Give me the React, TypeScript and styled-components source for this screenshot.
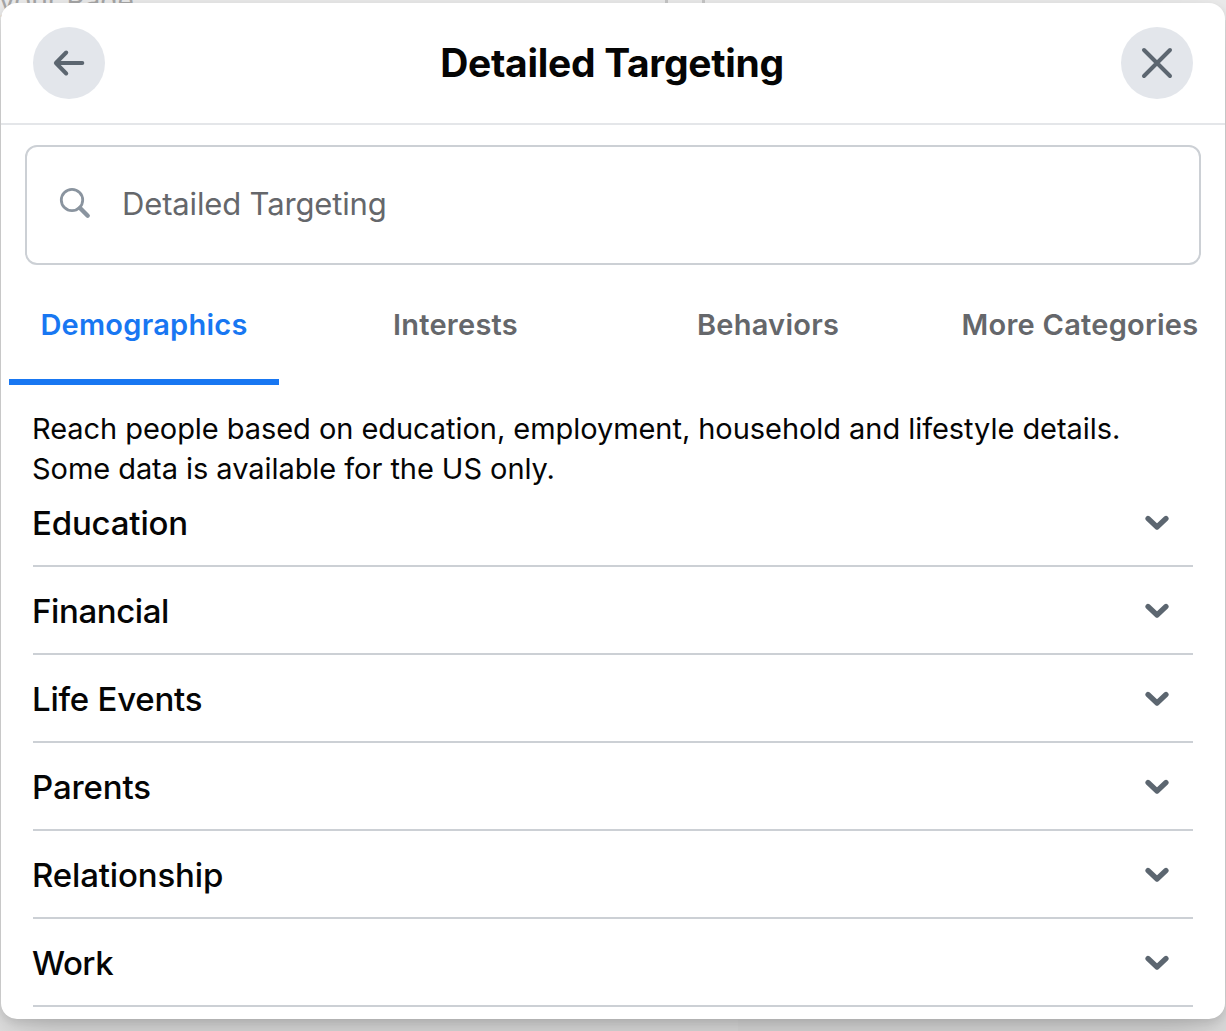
import React, { useState } from "react";
import styled, { createGlobalStyle } from "styled-components";

const GlobalStyle = createGlobalStyle`
  *, *::before, *::after { box-sizing: border-box; }
  html, body { margin: 0; height: 100%; overflow: hidden; }
  body { background: #ebebeb; font-family: Inter, "Liberation Sans", sans-serif; color: #050505; }
  #root { height: 100%; }
  button { font: inherit; border: 0; background: none; padding: 0; color: inherit; text-align: left; }
`;

const Page = styled.div`
  position: relative;
  height: 1031px;
  overflow: hidden;
  padding: 3px 1px 12px;
  background: linear-gradient(to right, #e8e8e8 0 738px, #e5e5e5 738px);
  isolation: isolate;
`;

const Backdrop = styled.div`
  position: absolute;
  inset: 0 0 auto 0;
  height: 20px;
  z-index: -1;
  background: #ededed;
  color: #a8a8a8;
  font-size: 28.2px;
  line-height: 30px;
  white-space: nowrap;
`;

const BackdropText = styled.span`
  position: absolute;
  left: -1px;
  top: -14px;
`;

const BackdropPill = styled.span`
  position: absolute;
  left: 665px;
  top: -26px;
  width: 40px;
  height: 40px;
  border: 3px solid #c8c8c8;
  border-radius: 9px;
`;

const Dialog = styled.section`
  display: flex;
  flex-direction: column;
  height: 1016px;
  background: #fff;
  border-radius: 16px;
  box-shadow: 0 24px 56px rgba(0, 0, 0, 0.2), 0 4px 8px rgba(0, 0, 0, 0.1);
`;

const Header = styled.header`
  display: flex;
  align-items: center;
  justify-content: space-between;
  height: 122px;
  padding: 0 32px;
  border-bottom: 2px solid #e4e6e9;
`;

const Title = styled.h1`
  margin: 0 2px 0 0;
  font-size: 39px;
  font-weight: 700;
  line-height: 48px;
  letter-spacing: -0.3px;
`;

const RoundButton = styled.button`
  display: flex;
  align-items: center;
  justify-content: center;
  width: 72px;
  height: 72px;
  border-radius: 50%;
  background: #e3e6eb;
  color: #5c6670;
`;

const SearchBox = styled.label`
  display: flex;
  align-items: center;
  gap: 31px;
  height: 120px;
  margin: 20px 24px 0;
  padding: 0 32px 2px;
  border: 2px solid #ccd0d5;
  border-radius: 12px;
`;

const SearchInput = styled.input`
  flex: 1;
  border: 0;
  outline: 0;
  padding: 0;
  background: none;
  font: 400 31px/40px Inter, "Liberation Sans", sans-serif;
  letter-spacing: -0.15px;
  &::placeholder { color: #65676b; opacity: 1; }
`;

const Tabs = styled.nav`
  display: grid;
  grid-template-columns: 270px 353px 272px 352px;
  height: 120px;
  margin-left: 8px;
`;

const Tab = styled.button<{ $active: boolean }>`
  display: flex;
  justify-content: center;
  padding-top: 40px;
  font-size: 29px;
  font-weight: 600;
  line-height: 40px;
  letter-spacing: 0.25px;
  white-space: nowrap;
  color: ${(p) => (p.$active ? "#1877f2" : "#65676b")};
  border-bottom: 6px solid ${(p) => (p.$active ? "#1877f2" : "transparent")};
  border-radius: 2px 2px 0 0;
`;

const Content = styled.div`
  padding: 24px 32px 0;
`;

const Description = styled.p`
  margin: 0 -20px 0 -1px;
  font-size: 29px;
  line-height: 40px;
  letter-spacing: -0.055px;
`;

const Row = styled.button`
  display: flex;
  align-items: center;
  justify-content: space-between;
  width: 100%;
  height: 88px;
  padding: 2px 24px 0 0;
  border-bottom: 2px solid #ccd0d5;
  &:first-child {
    height: 78px;
    padding: 0 24px 8px 0;
  }
`;

const List = styled.div`
  display: flex;
  flex-direction: column;
`;

const RowLabel = styled.span<{ $tracking: number }>`
  margin-left: -1px;
  font-size: 33px;
  font-weight: 500;
  line-height: 44px;
  letter-spacing: ${(p) => p.$tracking}px;
`;

const BackIcon = () => (
  <svg width="32" height="28" viewBox="0 0 32 28" fill="none" stroke="currentColor" strokeWidth="4" strokeLinecap="round" strokeLinejoin="round">
    <path d="M29.3 14H3.5M13.2 3.5L2.9 14L13.2 24.5" />
  </svg>
);

const CloseIcon = () => (
  <svg width="32" height="32" viewBox="0 0 32 32" fill="none" stroke="currentColor" strokeWidth="4" strokeLinecap="round">
    <path d="M3 3L29 29M29 3L3 29" />
  </svg>
);

const SearchGlyph = styled.svg`
  flex: none;
  margin-bottom: 2px;
`;

const SearchIcon = () => (
  <SearchGlyph width="32" height="32" viewBox="0 0 32 32" fill="none" stroke="#8a949f">
    <circle cx="13" cy="13" r="10.7" strokeWidth="2.8" />
    <path d="M21 21L28.7 28.7" strokeWidth="4.4" strokeLinecap="round" />
  </SearchGlyph>
);

const ChevronIcon = () => (
  <svg width="24" height="16" viewBox="0 0 24 16" fill="none" stroke="#5c6670" strokeWidth="5.2" strokeLinecap="round" strokeLinejoin="round">
    <path d="M3 3.5L12 12L21 3.5" />
  </svg>
);

const tabs = ["Demographics", "Interests", "Behaviors", "More Categories"];

const categories = [
  { label: "Education", tracking: -0.18 },
  { label: "Financial", tracking: -0.4 },
  { label: "Life Events", tracking: -0.25 },
  { label: "Parents", tracking: -0.15 },
  { label: "Relationship", tracking: -0.15 },
  { label: "Work", tracking: -0.5 },
];

export default function App() {
  const [active, setActive] = useState(0);
  return (
    <Page>
      <GlobalStyle />
      <Backdrop>
        <BackdropText>your Page</BackdropText>
        <BackdropPill />
      </Backdrop>
      <Dialog>
        <Header>
          <RoundButton aria-label="Back"><BackIcon /></RoundButton>
          <Title>Detailed Targeting</Title>
          <RoundButton aria-label="Close"><CloseIcon /></RoundButton>
        </Header>
        <SearchBox>
          <SearchIcon />
          <SearchInput placeholder="Detailed Targeting" />
        </SearchBox>
        <Tabs>
          {tabs.map((label, i) => (
            <Tab key={label} $active={i === active} onClick={() => setActive(i)}>{label}</Tab>
          ))}
        </Tabs>
        <Content>
          <Description>
            Reach people based on education, employment, household and lifestyle details.
            <br />
            Some data is available for the US only.
          </Description>
          <List>
            {categories.map((c) => (
              <Row key={c.label}>
                <RowLabel $tracking={c.tracking}>{c.label}</RowLabel>
                <ChevronIcon />
              </Row>
            ))}
          </List>
        </Content>
      </Dialog>
    </Page>
  );
}
